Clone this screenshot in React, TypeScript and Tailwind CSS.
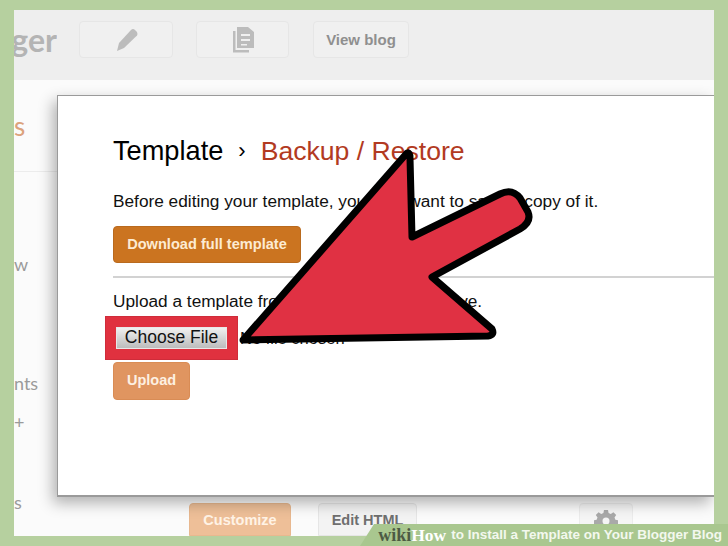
import React from "react";

const sans = "font-['Liberation_Sans',Arial,sans-serif]";

function TopButton({ children, w }: { children: React.ReactNode; w: string }) {
  return (
    <div className={`${w} h-[37px] flex items-center justify-center border border-[#e6e6e6] bg-[#f0f0f0] rounded-sm`}>
      {children}
    </div>
  );
}

function FooterButton({ w, className, children }: { w: string; className: string; children: React.ReactNode }) {
  return (
    <div className={`${w} h-[33px] flex items-center justify-center pt-[2px] rounded-t-sm text-[14.500px] font-bold ${className}`}>
      {children}
    </div>
  );
}

export default function App() {
  return (
    <div className={`relative w-[728px] h-[546px] overflow-hidden bg-[#b6d09f] pt-[10px] px-[14px] ${sans}`}>
      <div className="relative h-[526px] bg-[#fbfbfb] overflow-hidden">
        {/* header */}
        <div className="h-[70px] bg-[#eeeeee] flex items-start pt-[11px]">
          <div className="w-[43px] h-[37px] flex items-center overflow-hidden justify-end font-['Lato',sans-serif] text-[32px] font-bold text-[#b4b4b4] leading-none">
            <span>ger</span>
          </div>
          <div className="ml-[22px]">
            <TopButton w="w-[94px]">
              <svg width="26" height="26" viewBox="0 0 26 26" className="fill-[#bcbcbc]">
                <path d="M4 24 L6 16 L18 3 Q20 1 22 3 L24 5 Q25 7 24 8.5 L11 21 Z" />
              </svg>
            </TopButton>
          </div>
          <div className="ml-[23px]">
            <TopButton w="w-[93px]">
              <svg width="24" height="30" viewBox="0 0 24 30" className="fill-[#bcbcbc]">
                <path d="M6 2 H17 L23 7 V23 H6 Z M10 9 V11 H19 V9 Z M10 14 V16 H19 V14 Z M10 19 V20.5 H16 V19 Z" fillRule="evenodd" />
                <path d="M2 6 H4.500 V25 H18 V27.500 H2 Z" />
              </svg>
            </TopButton>
          </div>
          <div className="ml-[24px]">
            <TopButton w="w-[96px]">
              <span className="pt-[2px] text-[15px] font-bold text-[#8f8f8f]">View blog</span>
            </TopButton>
          </div>
        </div>

        {/* sidebar + footer, seen behind the dialog */}
        <div className="flex h-[456px]">
          <div className="w-[43px] overflow-hidden font-['Lato',sans-serif] text-[#9a9a9a] text-[18px]">
            <div className="h-[92px] border-b border-[#ececec] pt-[33px] text-[#dca27c] text-[26px] leading-[26px]">s</div>
            <div className="mt-[82px] leading-[20px]">w</div>
            <div className="mt-[99px] leading-[20px]">nts</div>
            <div className="mt-[19px] leading-[20px]">+</div>
            <div className="mt-[60px] leading-[20px]">s</div>
          </div>
          <div className="flex-1 flex items-end">
            <div className="ml-[132px]">
              <FooterButton w="w-[102px]" className="bg-[#eebf98] text-[#fff3e6] border border-[#e8b88f]">Customize</FooterButton>
            </div>
            <div className="ml-[27px]">
              <FooterButton w="w-[99px]" className="bg-[#f3f3f3] text-[#6f6f6f] border border-[#e6e6e6]">Edit HTML</FooterButton>
            </div>
            <div className="ml-[162px]">
              <FooterButton w="w-[54px]" className="bg-[#f5f5f5] border border-[#ececec]">
                <svg width="24" height="24" viewBox="0 0 24 24" className="fill-[#a9a9a9]">
                  <path fillRule="evenodd" d="M10 1h4l.6 3 2.2.9 2.6-1.700 2.800 2.800-1.700 2.600.9 2.200 3 .6v4l-3 .6-.9 2.200 1.700 2.600-2.800 2.800-2.600-1.700-2.200.9-.6 3h-4l-.6-3-2.200-.9-2.600 1.700-2.800-2.800 1.700-2.600-.9-2.200-3-.6v-4l3-.6.9-2.200-1.700-2.600 2.800-2.800 2.600 1.700 2.200-.9z M12 8.500a3.500 3.500 0 1 0 0 7a3.500 3.500 0 1 0 0-7z" />
                </svg>
              </FooterButton>
            </div>
          </div>
        </div>

        {/* dialog */}
        <div className="absolute left-[43px] top-[85px] right-0 h-[402px] bg-white border-l border-t border-b-2 border-[#9a9a9a] shadow-[-4px_6px_14px_rgba(0,0,0,0.3)] pl-[55px] pt-[38px] text-black">
          <div className="flex items-center text-[27.200px] leading-[34px]">
            <span>Template</span>
            <span className="mx-[15px] text-[22px]">›</span>
            <span className="text-[26.600px] text-[#b23a22]">Backup / Restore</span>
          </div>
          <p className="mt-[23px] text-[17.260px] leading-[20px] whitespace-nowrap text-[#111]">
            Before editing your template, you may want to save a copy of it.
          </p>
          <div className="mt-[15px] w-[188px] h-[37px] flex items-center justify-center pt-[1px] rounded-sm bg-[#cb7420] border border-[#b96a1e] text-[14.600px] font-bold text-[#fdebd2]">
            Download full template
          </div>
          <div className="mt-[13px] h-[2px] bg-[#d2d2d2]" />
          <p className="mt-[13px] text-[17.260px] leading-[20px] whitespace-nowrap text-[#111]">
            Upload a template from a file on your hard drive.
          </p>
          <div className="-ml-[8px] mt-[5px] w-[133px] h-[44px] bg-[#e0313f] border border-[#cf2c3a] flex items-center pl-[10px]">
            <div className="w-[111px] h-[22px] flex items-center justify-center bg-gradient-to-b from-[#f0f0f0] to-[#bdbdbd] border border-[#e8e8e8] text-[17.500px] leading-none text-[#111]">
              Choose File
            </div>
          </div>
          <div className="mt-[2px] w-[77px] h-[38px] flex items-center justify-center rounded-sm bg-[#e09560] border border-[#d98c55] text-[14.500px] font-bold text-[#fdf0e2]">
            Upload
          </div>
          <span className="absolute left-[182px] top-[232px] text-[16.500px] leading-[20px] text-[#111]">No file chosen</span>
        </div>
      </div>

      {/* arrow */}
      <svg className="absolute left-0 top-0 pointer-events-none" width="728" height="546" viewBox="0 0 728 546">
        <path
          d="M243 340 L407 153 Q410 152 410 158 L412 237 L500 194 Q512 188 520 198 L528 212 Q532 222 520 229 L432 277 L492 329 Q495 335 488 336 Z"
          fill="#e03143"
          stroke="#000"
          strokeWidth="7"
          strokeLinejoin="round"
        />
      </svg>

      {/* wikiHow banner */}
      <div
        className="absolute right-0 bottom-0 w-[368px] h-[22px] bg-[#a9c78f] flex items-center justify-end pr-[6px] whitespace-nowrap [clip-path:polygon(14px_0,100%_0,100%_100%,0_100%)]"
      >
        <span className="font-['Liberation_Serif',serif] font-bold text-[18px] text-[#4d5a44]">wiki</span>
        <span className="font-['Liberation_Serif',serif] font-bold text-[17.500px] text-white">How</span>
        <span className="ml-[5px] text-[13.500px] font-bold text-[#f3f8ee]">to Install a Template on Your Blogger Blog</span>
      </div>
    </div>
  );
}
